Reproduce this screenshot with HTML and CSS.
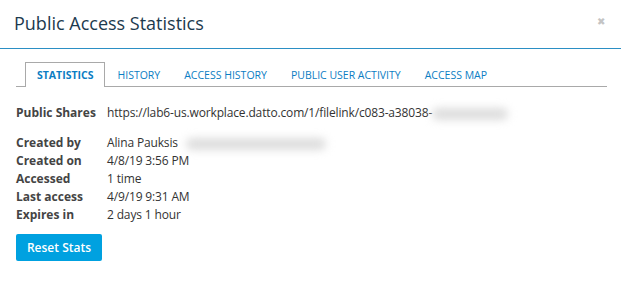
FILE: index.html
```html
<!DOCTYPE html>
<html lang="en">
<head>
    <meta charset="UTF-8">
    <title>Public Access Statistics</title>
    <link rel="stylesheet" href="styles.css">
</head>
<body>
    <div class="modal">
        <div class="modal-header">
            <h2>Public Access Statistics</h2>
            <span class="close">&#x2716;</span>
        </div>

        <div class="modal-body">
            <ul class="tabs">
                <li class="active">Statistics</li>
                <li>History</li>
                <li>Access History</li>
                <li>Public User Activity</li>
                <li>Access Map</li>
            </ul>

            <dl class="stats shares">
                <dt>Public Shares</dt>
                <dd>https://lab6-us.workplace.datto.com/1/filelink/c083-a38038-<span class="blurred wide"></span></dd>
            </dl>

            <dl class="stats">
                <dt>Created by</dt>
                <dd>Alina Pauksis<span class="blurred email"></span></dd>
                <dt>Created on</dt>
                <dd>4/8/19 3:56 PM</dd>
                <dt>Accessed</dt>
                <dd>1 time</dd>
                <dt>Last access</dt>
                <dd>4/9/19 9:31 AM</dd>
                <dt>Expires in</dt>
                <dd>2 days 1 hour</dd>
            </dl>

            <button class="btn-primary">Reset Stats</button>
        </div>
    </div>
</body>
</html>
```

FILE: styles.css
```css
:root {
    --header-line: #2b8fc4;
    --tab-blue: #0b7dc3;
    --tab-border: #a9a9a9;
    --button-blue: #00a1e0;
    --text-color: #333;
}

body {
    margin: 0;
    font-family: 'Open Sans', 'Liberation Sans', sans-serif;
    color: var(--text-color);
    background: #fff;
}

.modal-header {
    display: flex;
    align-items: center;
    justify-content: space-between;
    height: 48px;
    padding: 0 16px 0 14px;
    border-bottom: 1px solid var(--header-line);
}

.modal-header h2 {
    margin: 0;
    font-size: 18px;
    font-weight: 400;
    color: #1c3a4e;
    padding-bottom: 2px;
}

.close {
    font-size: 10px;
    color: #c4c4c4;
    margin-top: -6px;
}

.modal-body {
    padding: 13px 14px 0 16px;
}

.tabs {
    display: flex;
    margin: 0;
    padding: 0 0 0 9px;
    list-style: none;
    border-bottom: 1px solid var(--tab-border);
}

.tabs li {
    padding: 0 11px;
    height: 23px;
    line-height: 24px;
    font-size: 10.5px;
    text-transform: uppercase;
    color: var(--tab-blue);
    border: 1px solid transparent;
    border-bottom: none;
    margin-bottom: -1px;
}

.tabs li.active {
    font-weight: 700;
    border-color: var(--tab-border);
    background: #fff;
    height: 24px;
}

.stats {
    display: grid;
    grid-template-columns: 91px 1fr;
    margin: 0;
    font-size: 12px;
    line-height: 18px;
}

.stats dt {
    font-weight: 700;
    color: #444;
}

.stats dd {
    margin: 0;
    white-space: nowrap;
    letter-spacing: -0.15px;
}

.shares {
    margin: 17px 0 12px;
}

.blurred {
    display: inline-block;
    height: 12px;
    vertical-align: middle;
    background: #ddd;
    border-radius: 6px;
    filter: blur(4px);
}

.blurred.wide {
    width: 76px;
}

.blurred.email {
    width: 140px;
    margin-left: 8px;
}

.btn-primary {
    margin-top: 10px;
    width: 86px;
    height: 27px;
    border: none;
    border-radius: 2px;
    background: var(--button-blue);
    color: #fff;
    font-family: 'Open Sans', 'Liberation Sans', sans-serif;
    font-size: 12px;
    font-weight: 600;
}
```
